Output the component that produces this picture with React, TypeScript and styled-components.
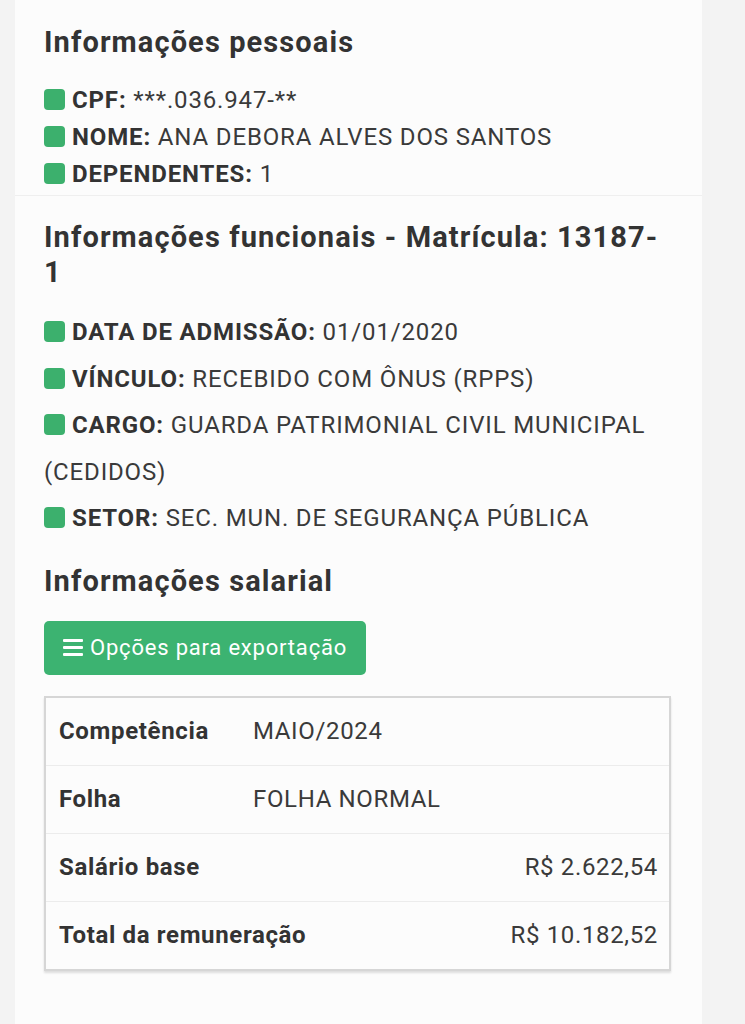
import React from 'react';
import styled, { createGlobalStyle } from 'styled-components';

const GlobalStyle = createGlobalStyle`
  html, body {
    margin: 0;
    padding: 0;
    background: #f3f3f3;
    font-family: Roboto, "Liberation Sans", Arial, sans-serif;
    color: #333333;
  }
`;

const Page = styled.div`
  padding: 0 43px 0 15px;
`;

const Card = styled.div`
  background: #fcfcfc;
  min-height: 1024px;
`;

const Section = styled.section<{ $divider?: boolean }>`
  padding: 0 30px 0 29px;
  border-top: ${(p) => (p.$divider ? '1px solid #efefef' : 'none')};
`;

const Heading = styled.h3`
  margin: 0;
  font-size: 29px;
  letter-spacing: 1.1px;
  font-weight: 700;
  line-height: 35px;
  color: #333333;
`;

const List = styled.ul<{ $lineHeight: number }>`
  list-style: none;
  margin: 0;
  padding: 0;
  font-size: 24px;
  letter-spacing: 0.85px;
  line-height: ${(p) => p.$lineHeight}px;
`;

const Item = styled.li`
  color: #3a3a3a;
`;

const Marker = styled.span`
  display: inline-block;
  width: 21px;
  height: 21px;
  border-radius: 4px;
  background: #3cb06d;
  vertical-align: -2px;
  margin-right: 7px;
`;

const Label = styled.strong`
  font-weight: 700;
  color: #333333;
`;

const ExportButton = styled.button`
  display: inline-flex;
  align-items: center;
  gap: 7px;
  height: 54px;
  padding: 0 19px 0 19px;
  border: none;
  border-radius: 5px;
  background: #3cb371;
  color: #ffffff;
  font-family: Roboto, "Liberation Sans", Arial, sans-serif;
  font-size: 22px;
  letter-spacing: 0.8px;
  cursor: pointer;
`;

const Table = styled.div`
  width: 623px;
  border: 2px solid #d6d6d6;
  box-shadow: 0 2px 2px rgba(0, 0, 0, 0.12);
  background: #fcfcfc;
  font-size: 24px;
  letter-spacing: 0.65px;
`;

const Row = styled.div`
  display: grid;
  grid-template-columns: 194px 1fr;
  align-items: center;
  height: 67px;
  padding: 0 11px 0 13px;
  & + & {
    border-top: 1px solid #ececec;
  }
`;

const Th = styled.div`
  font-weight: 700;
  white-space: nowrap;
  color: #333333;
`;

const Td = styled.div<{ $right?: boolean }>`
  text-align: ${(p) => (p.$right ? 'right' : 'left')};
  color: #3a3a3a;
`;

const MenuIcon = () => (
  <svg width="20" height="17" viewBox="0 0 20 17" fill="#ffffff">
    <rect x="0" y="0" width="20" height="3" rx="1" />
    <rect x="0" y="7" width="20" height="3" rx="1" />
    <rect x="0" y="14" width="20" height="3" rx="1" />
  </svg>
);

const personal = [
  { label: 'CPF:', value: '***.036.947-**' },
  { label: 'NOME:', value: 'ANA DEBORA ALVES DOS SANTOS' },
  { label: 'DEPENDENTES:', value: '1' },
];

const functional = [
  { label: 'DATA DE ADMISSÃO:', value: '01/01/2020' },
  { label: 'VÍNCULO:', value: 'RECEBIDO COM ÔNUS (RPPS)' },
  { label: 'CARGO:', value: 'GUARDA PATRIMONIAL CIVIL MUNICIPAL (CEDIDOS)' },
  { label: 'SETOR:', value: 'SEC. MUN. DE SEGURANÇA PÚBLICA' },
];

const salary = [
  { label: 'Competência', value: 'MAIO/2024', right: false },
  { label: 'Folha', value: 'FOLHA NORMAL', right: false },
  { label: 'Salário base', value: 'R$ 2.622,54', right: true },
  { label: 'Total da remuneração', value: 'R$ 10.182,52', right: true },
];

const App: React.FC = () => {
  return (
    <>
      <GlobalStyle />
      <Page>
        <Card>
          <Section style={{ paddingTop: 25, paddingBottom: 2 }}>
            <Heading>Informações pessoais</Heading>
            <List $lineHeight={37} style={{ marginTop: 22 }}>
              {personal.map((i) => (
                <Item key={i.label}>
                  <Marker />
                  <Label>{i.label}</Label> {i.value}
                </Item>
              ))}
            </List>
          </Section>
          <Section $divider style={{ paddingTop: 24 }}>
            <Heading>
              Informações funcionais - Matrícula: 13187-<wbr />1
            </Heading>
            <List $lineHeight={46.5} style={{ marginTop: 19 }}>
              {functional.map((i) => (
                <Item key={i.label}>
                  <Marker />
                  <Label>{i.label}</Label> {i.value}
                </Item>
              ))}
            </List>
            <Heading style={{ marginTop: 22 }}>Informações salarial</Heading>
            <div style={{ marginTop: 22 }}>
              <ExportButton>
                <MenuIcon />
                Opções para exportação
              </ExportButton>
            </div>
            <div style={{ marginTop: 21 }}>
              <Table>
                {salary.map((r) => (
                  <Row key={r.label}>
                    <Th>{r.label}</Th>
                    <Td $right={r.right}>{r.value}</Td>
                  </Row>
                ))}
              </Table>
            </div>
          </Section>
        </Card>
      </Page>
    </>
  );
};

export default App;
